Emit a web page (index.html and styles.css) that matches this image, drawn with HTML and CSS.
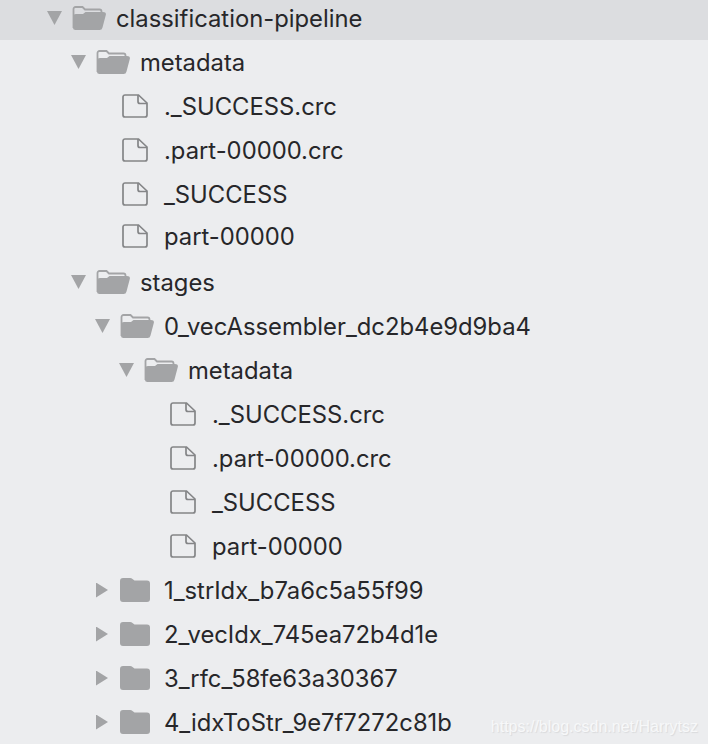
FILE: index.html
```html
<!DOCTYPE html>
<html>
    <head>
        <title>classification-pipeline</title>
        <meta charset="UTF-8">
        <meta name="viewport" content="width=device-width, initial-scale=1.0">
        <link rel="stylesheet" href="styles.css">
    </head>
    <body>
        <svg class="icon-defs" width="0" height="0">
            <symbol id="open-folder" viewBox="0 0 34 24">
                <path d="M1.500 22V3a2 2 0 0 1 2-2h7L13 3.500H27.500A2 2 0 0 1 29.500 5.500V7" fill="none" stroke="#a3a4a6" stroke-width="1.800"/>
                <path d="M1 22V10.500Q1 8 4 8L11 8 13.500 6H31Q34.500 6 33.800 9L30.500 21.500Q30 24 27.500 24H3.500Q1 24 1 22Z" fill="#a3a4a6"/>
            </symbol>
            <symbol id="closed-folder" viewBox="0 0 30 24">
                <path d="M0 3Q0 0 3 0H10Q11.500 0 12.500 1L14.500 2.500H27Q30 2.500 30 5.500V21Q30 24 27 24H3Q0 24 0 21Z" fill="#a3a4a6"/>
            </symbol>
            <symbol id="file" viewBox="0 0 26 24">
                <path d="M3 1H16.500L25 9V21A2 2 0 0 1 23 23H3A2 2 0 0 1 1 21V3A2 2 0 0 1 3 1Z" fill="none" stroke="#848587" stroke-width="1.700"/>
                <path d="M16 1V7.500A2 2 0 0 0 18 9.500H25" fill="none" stroke="#848587" stroke-width="1.700"/>
            </symbol>
        </svg>

        <div class="tree">
            <div class="row row-selected depth-0">
                <span class="arrow arrow-open"></span>
                <svg class="folder-open"><use href="#open-folder"></use></svg>
                <span class="name">classification-pipeline</span>
            </div>
            <div class="row depth-1">
                <span class="arrow arrow-open"></span>
                <svg class="folder-open"><use href="#open-folder"></use></svg>
                <span class="name">metadata</span>
            </div>
            <div class="row depth-2">
                <span class="arrow-blank"></span>
                <svg class="file-icon"><use href="#file"></use></svg>
                <span class="name">._SUCCESS.crc</span>
            </div>
            <div class="row depth-2">
                <span class="arrow-blank"></span>
                <svg class="file-icon"><use href="#file"></use></svg>
                <span class="name">.part-00000.crc</span>
            </div>
            <div class="row depth-2">
                <span class="arrow-blank"></span>
                <svg class="file-icon"><use href="#file"></use></svg>
                <span class="name">_SUCCESS</span>
            </div>
            <div class="row row-tight depth-2">
                <span class="arrow-blank"></span>
                <svg class="file-icon"><use href="#file"></use></svg>
                <span class="name">part-00000</span>
            </div>
            <div class="row depth-1">
                <span class="arrow arrow-open"></span>
                <svg class="folder-open"><use href="#open-folder"></use></svg>
                <span class="name">stages</span>
            </div>
            <div class="row depth-2">
                <span class="arrow arrow-open"></span>
                <svg class="folder-open"><use href="#open-folder"></use></svg>
                <span class="name">0_vecAssembler_dc2b4e9d9ba4</span>
            </div>
            <div class="row depth-3">
                <span class="arrow arrow-open"></span>
                <svg class="folder-open"><use href="#open-folder"></use></svg>
                <span class="name">metadata</span>
            </div>
            <div class="row depth-4">
                <span class="arrow-blank"></span>
                <svg class="file-icon"><use href="#file"></use></svg>
                <span class="name">._SUCCESS.crc</span>
            </div>
            <div class="row depth-4">
                <span class="arrow-blank"></span>
                <svg class="file-icon"><use href="#file"></use></svg>
                <span class="name">.part-00000.crc</span>
            </div>
            <div class="row depth-4">
                <span class="arrow-blank"></span>
                <svg class="file-icon"><use href="#file"></use></svg>
                <span class="name">_SUCCESS</span>
            </div>
            <div class="row depth-4">
                <span class="arrow-blank"></span>
                <svg class="file-icon"><use href="#file"></use></svg>
                <span class="name">part-00000</span>
            </div>
            <div class="row depth-2">
                <span class="arrow arrow-closed"></span>
                <svg class="folder-closed"><use href="#closed-folder"></use></svg>
                <span class="name">1_strIdx_b7a6c5a55f99</span>
            </div>
            <div class="row depth-2">
                <span class="arrow arrow-closed"></span>
                <svg class="folder-closed"><use href="#closed-folder"></use></svg>
                <span class="name">2_vecIdx_745ea72b4d1e</span>
            </div>
            <div class="row depth-2">
                <span class="arrow arrow-closed"></span>
                <svg class="folder-closed"><use href="#closed-folder"></use></svg>
                <span class="name">3_rfc_58fe63a30367</span>
            </div>
            <div class="row depth-2">
                <span class="arrow arrow-closed"></span>
                <svg class="folder-closed"><use href="#closed-folder"></use></svg>
                <span class="name">4_idxToStr_9e7f7272c81b</span>
            </div>
        </div>

        <div class="watermark">https://blog.csdn.net/Harrytsz</div>
    </body>
</html>
```

FILE: styles.css
```css
* {
    box-sizing: border-box;
    margin: 0;
    padding: 0;
}

body {
    background: #ecedef;
    color: #27272a;
    font-family: 'Inter', 'Liberation Sans', sans-serif;
    height: 744px;
    overflow: hidden;
    position: relative;
}

.icon-defs {
    position: absolute;
}

.row {
    align-items: center;
    display: flex;
    height: 44px;
}

/* first row is cut off by the top of the window */
.row-selected {
    background: #dcdde0;
    height: 40px;
    padding-bottom: 4px;
}

.row-tight {
    height: 40px;
    margin-bottom: 4px;
}

.depth-0 { padding-left: 47px; }
.depth-1 { padding-left: 71px; }
.depth-2 { padding-left: 95px; }
.depth-3 { padding-left: 119px; }
.depth-4 { padding-left: 143px; }

.arrow,
.arrow-blank {
    flex: none;
    height: 14px;
    margin-right: 10px;
    width: 15px;
}

.arrow-open {
    background: #a3a4a6;
    clip-path: polygon(0 0, 100% 0, 50% 100%);
}

.arrow-closed {
    background: #a3a4a6;
    clip-path: polygon(0 0, 100% 50%, 0 100%);
    height: 15px;
    margin-left: 1px;
    margin-right: 12px;
    width: 12px;
}

.folder-open {
    flex: none;
    height: 24px;
    margin-right: 10px;
    width: 34px;
}

.folder-closed {
    flex: none;
    height: 24px;
    margin-right: 14px;
    width: 30px;
}

.file-icon {
    flex: none;
    height: 24px;
    margin-left: 2px;
    margin-right: 16px;
    width: 26px;
}

.name {
    font-size: 23.8px;
    white-space: nowrap;
}

.watermark {
    bottom: 8px;
    color: #f7f8f9;
    font-family: 'Liberation Sans', Arial, sans-serif;
    font-size: 16px;
    position: absolute;
    right: 10px;
    text-shadow: 1px 1px 1px #d9dadc;
}
```
